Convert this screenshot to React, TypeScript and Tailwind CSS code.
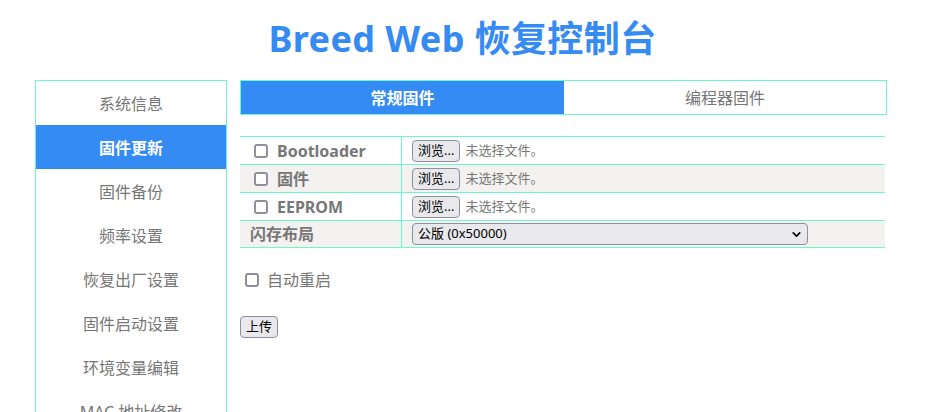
import { ChevronDown } from "lucide-react";

const menu = [
  "系统信息",
  "固件更新",
  "固件备份",
  "频率设置",
  "恢复出厂设置",
  "固件启动设置",
  "环境变量编辑",
  "MAC 地址修改",
];

const files = ["Bootloader", "固件", "EEPROM"];

function Box() {
  return <span className="inline-block h-[14px] w-[14px] shrink-0 rounded-[3px] border-2 border-[#8f8f9d] bg-white" />;
}

function Btn({ children }: { children: React.ReactNode }) {
  return (
    <span className="inline-flex h-[22px] items-center rounded-[4px] border border-[#8f8f9d] bg-[#e9e9ed] px-[5px] text-[13px] text-black">
      {children}
    </span>
  );
}

export default function App() {
  return (
    <div className="min-h-[412px] overflow-hidden bg-white font-['Noto_Sans','Noto_Sans_CJK_SC',sans-serif] text-[#777]">
      <h1 className="flex h-[80px] items-center justify-center pb-[2px] text-[36px] font-bold tracking-[0.4px] text-[#358bf2]">
        Breed Web 恢复控制台
      </h1>

      <div className="flex gap-[13px] pl-[35px]">
        <div className="w-[192px] shrink-0 border border-[#6cf7cc]">
          {menu.map((m, i) => (
            <div
              key={m}
              className={
                i === 1
                  ? "flex h-[44px] items-center justify-center bg-[#338bf3] pt-[1px] text-[16px] font-bold text-white"
                  : "flex h-[44px] items-center justify-center pt-[1px] text-[16px] text-[#777]"
              }
            >
              {m}
            </div>
          ))}
        </div>

        <div className="w-[647px] shrink-0">
          <div className="flex h-[35px] border border-[#6cf7cc]">
            <div className="flex w-[323px] items-center justify-center bg-[#338bf3] text-[16px] font-bold text-white">
              常规固件
            </div>
            <div className="flex flex-1 items-center justify-center text-[16px] text-[#777]">编程器固件</div>
          </div>

          <div className="mt-[21px] w-[645px] border-t border-[#6cf7cc]">
            {files.map((f, i) => (
              <div
                key={f}
                className={
                  i === 1
                    ? "flex h-[28px] border-b border-[#6cf7cc] bg-[#f3f2f1]"
                    : "flex h-[28px] border-b border-[#6cf7cc] bg-white"
                }
              >
                <div className="flex w-[162px] items-center gap-[9px] border-r border-[#6cf7cc] pl-[14px] text-[16px] font-bold">
                  <Box />
                  {f}
                </div>
                <div className="flex items-center gap-[5px] pl-[10px]">
                  <Btn>浏览...</Btn>
                  <span className="text-[13px] text-[#777]">未选择文件。</span>
                </div>
              </div>
            ))}
            <div className="flex h-[27px] border-b border-[#6cf7cc] bg-[#f3f2f1]">
              <div className="flex w-[162px] items-center border-r border-[#6cf7cc] pl-[10px] text-[16px] font-bold">
                闪存布局
              </div>
              <div className="flex items-center pl-[10px]">
                <div className="flex h-[22px] w-[396px] items-center justify-between rounded-[4px] border border-[#8f8f9d] bg-[#e9e9ed] pl-[5px] pr-[4px] text-[13px] text-black">
                  公版 (0x50000)
                  <ChevronDown size={13} strokeWidth={3} />
                </div>
              </div>
            </div>
          </div>

          <div className="mt-[20px] flex items-center gap-[8px] pl-[5px] text-[16px]">
            <Box />
            自动重启
          </div>

          <div className="mt-[21px]">
            <Btn>上传</Btn>
          </div>
        </div>
      </div>
    </div>
  );
}
